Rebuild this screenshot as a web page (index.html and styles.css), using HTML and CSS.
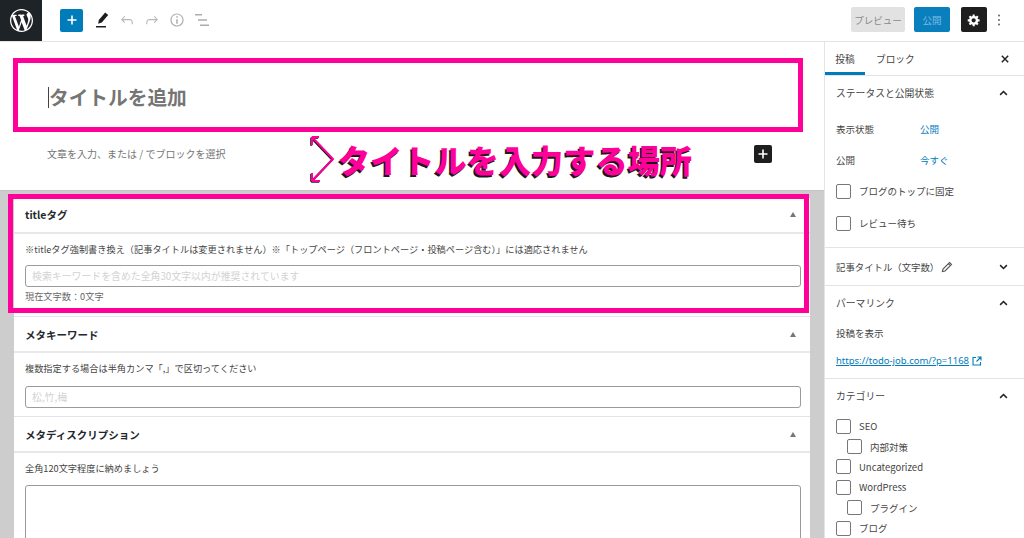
FILE: index.html
```html
<!DOCTYPE html>
<html lang="ja">
<head>
<meta charset="utf-8">
<title>投稿を編集</title>
<link rel="stylesheet" href="styles.css">
</head>
<body>
<div class="app">
  <header class="topbar">
    <div class="logo">
      <svg width="23" height="23" viewBox="0 0 20 20"><path fill="#fff" d="M20 10c0-5.51-4.49-10-10-10C4.48 0 0 4.49 0 10c0 5.52 4.48 10 10 10 5.51 0 10-4.48 10-10zM7.78 15.37L4.37 6.22c.55-.02 1.17-.08 1.17-.08.5-.06.44-1.13-.06-1.11 0 0-1.45.11-2.37.11-.18 0-.37 0-.58-.01C4.12 2.69 6.87 1.11 10 1.11c2.33 0 4.45.87 6.05 2.34-.68-.11-1.65.39-1.65 1.58 0 .74.45 1.36.9 2.1.35.61.55 1.36.55 2.46 0 1.49-1.4 5-1.4 5l-3.03-8.37c.54-.02.82-.17.82-.17.5-.05.44-1.25-.06-1.22 0 0-1.44.12-2.38.12-.87 0-2.33-.12-2.33-.12-.5-.03-.56 1.2-.06 1.22l.92.08 1.26 3.41zM17.41 10c.24-.64.74-1.87.43-4.25.7 1.29 1.05 2.71 1.05 4.25 0 3.29-1.73 6.24-4.4 7.78.97-2.59 1.94-5.2 2.92-7.78zM6.1 18.09C3.12 16.65 1.11 13.53 1.11 10c0-1.3.23-2.48.72-3.59C3.25 10.3 4.67 14.2 6.1 18.09zm4.03-6.63l2.58 6.98c-.86.29-1.76.45-2.71.45-.79 0-1.57-.11-2.29-.33.81-2.38 1.62-4.74 2.42-7.1z"/></svg>
    </div>
    <div class="tools">
      <span class="add-btn"><svg width="12" height="12" viewBox="0 0 12 12"><path fill="#fff" d="M5.2 1.500h1.600v3.700h3.700v1.600H6.800v3.700H5.200V6.800H1.500V5.200h3.700z"/></svg></span>
      <svg class="tool pen" width="18" height="18" viewBox="0 0 18 18"><path fill="#1e1e1e" d="M12.2 1.500l3 2.600-6.400 7.400-3.600 1.200.6-3.800z"/><rect x="3" y="15" width="10" height="1.500" fill="#1e1e1e"/></svg>
      <svg class="tool" width="18" height="18" viewBox="0 0 24 24"><path fill="#b5b9bd" d="M18.3 11.7c-.6-.6-1.4-.9-2.3-.9H6.7l2.9-3.3-1.1-1-4.500 5L8.500 16l1-1-2.700-2.700H16c.5 0 .9.2 1.300.5 1 1 1 3.400 1 4.500v.3h1.500v-.2c0-1.500 0-4.300-1.500-5.700z"/></svg>
      <svg class="tool" width="18" height="18" viewBox="0 0 24 24"><path fill="#b5b9bd" d="M15.6 6.500l-1.100 1 2.900 3.300H8c-.9 0-1.700.3-2.300.9-1.400 1.500-1.400 4.200-1.400 5.600v.2h1.500v-.3c0-1.100 0-3.500 1-4.500.3-.3.7-.5 1.300-.5h9.200L14.300 15l1.100 1.100 4.600-4.600-4.400-5z"/></svg>
      <svg class="tool" width="18" height="18" viewBox="0 0 24 24"><path fill="#a9adb1" d="M12 3.200c-4.800 0-8.800 3.900-8.800 8.800 0 4.800 3.900 8.800 8.800 8.800 4.800 0 8.800-3.900 8.800-8.800 0-4.800-4-8.800-8.800-8.800zm0 16c-4 0-7.200-3.300-7.200-7.200C4.800 8 8 4.800 12 4.800s7.200 3.300 7.200 7.200c0 4-3.200 7.200-7.200 7.200zM11 17h2v-6h-2v6zm0-8h2V7h-2v2z"/></svg>
      <svg class="tool" width="18" height="18" viewBox="0 0 18 18"><path fill="#a9adb1" d="M2 3h7v1.400H2zM5 8.300h9v1.400H5zM7 13.600h9V15H7z"/></svg>
    </div>
    <div class="actions">
      <span class="btn-preview">プレビュー</span>
      <span class="btn-publish">公開</span>
      <span class="btn-gear"><svg width="14" height="14" viewBox="0 0 20 20"><path fill="#fff" d="M18 12h-2.180c-.17.7-.44 1.350-.81 1.930l1.540 1.540-2.100 2.100-1.540-1.540c-.58.36-1.230.63-1.910.79V19H8v-2.180c-.68-.16-1.330-.43-1.910-.79l-1.540 1.540-2.120-2.120 1.540-1.540c-.36-.58-.63-1.230-.79-1.910H1V9.030h2.170c.16-.7.44-1.350.8-1.940L2.430 5.550l2.100-2.100 1.540 1.540c.58-.37 1.240-.64 1.930-.81V2h3v2.180c.68.16 1.330.43 1.910.79l1.540-1.540 2.120 2.120-1.540 1.540c.36.59.64 1.240.8 1.940H18V12zm-8.500 1.500c1.660 0 3-1.340 3-3s-1.340-3-3-3-3 1.340-3 3 1.340 3 3 3z"/></svg></span>
      <svg class="dots" width="4" height="12" viewBox="0 0 4 12"><circle cx="2" cy="1.500" r=".9" fill="#555"/><circle cx="2" cy="6" r=".9" fill="#555"/><circle cx="2" cy="10.500" r=".9" fill="#555"/></svg>
    </div>
  </header>

  <div class="workspace">
    <main class="main">
      <section class="editor">
        <div class="title-line"><span class="caret"></span><h1 class="post-title">タイトルを追加</h1></div>
        <div class="para-line">
          <p class="para">文章を入力、または / でブロックを選択</p>
          <span class="inline-add"><svg width="12" height="12" viewBox="0 0 12 12"><path fill="#fff" d="M5.200 1.500h1.600v3.700h3.700v1.600H6.800v3.700H5.200V6.800H1.500V5.200h3.700z"/></svg></span>
        </div>
      </section>

      <section class="metaboxes">
        <div class="panel">
          <article class="mbox">
            <div class="mbox-head head-first"><h2 class="mbox-title">titleタグ</h2><span class="tri"></span></div>
            <div class="mbox-body first-body">
              <p class="note">※titleタグ強制書き換え（記事タイトルは変更されません）※「トップページ（フロントページ・投稿ページ含む）」には適応されません</p>
              <div class="field ph">検索キーワードを含めた全角30文字以内が推奨されています</div>
              <p class="count">現在文字数：0文字</p>
            </div>
          </article>
          <article class="mbox">
            <div class="mbox-head"><h2 class="mbox-title">メタキーワード</h2><span class="tri"></span></div>
            <div class="mbox-body second-body">
              <p class="note">複数指定する場合は半角カンマ「,」で区切ってください</p>
              <div class="field field-low ph">松,竹,梅</div>
            </div>
          </article>
          <article class="mbox">
            <div class="mbox-head"><h2 class="mbox-title">メタディスクリプション</h2><span class="tri"></span></div>
            <div class="mbox-body third-body">
              <p class="note">全角120文字程度に納めましょう</p>
              <div class="area"></div>
            </div>
          </article>
        </div>
      </section>

      <div class="mark mark-title"></div>
      <div class="mark mark-meta"></div>
      <div class="callout">
        <svg class="brace" width="28" height="50" viewBox="0 0 28 50"><path d="M3 3l21 22L3 47M3 3h7M3 3v8M3 47h8M3 47v-8" fill="none" stroke="#1a1a1a" stroke-width="2" transform="translate(-.8 .8)"/><path d="M3 3l21 22L3 47M3 3h7M3 3v8M3 47h8M3 47v-8" fill="none" stroke="#ff0098" stroke-width="2"/></svg>
        <span class="callout-text">タイトルを入力する場所</span>
      </div>
    </main>

    <aside class="sidebar">
      <nav class="tabs">
        <span class="tab tab-on">投稿</span>
        <span class="tab">ブロック</span>
        <svg class="close" width="8" height="8" viewBox="0 0 10 10"><path d="M1 1l8 8M9 1l-8 8" stroke="#222" stroke-width="1.800"/></svg>
      </nav>

      <section class="sec sec-status">
        <div class="sec-head"><span>ステータスと公開状態</span><svg class="chev" width="9" height="6" viewBox="0 0 12 8"><path d="M1.500 6.500L6 2l4.500 4.500" fill="none" stroke="#222" stroke-width="2"/></svg></div>
        <div class="kv kv-a"><span class="k">表示状態</span><span class="v">公開</span></div>
        <div class="kv"><span class="k">公開</span><span class="v">今すぐ</span></div>
        <label class="chk chk-a"><span class="box"></span>ブログのトップに固定</label>
        <label class="chk chk-b"><span class="box"></span>レビュー待ち</label>
      </section>

      <section class="sec sec-seo">
        <div class="sec-head head-seo"><span class="with-icon">記事タイトル（文字数）<svg width="12" height="12" viewBox="0 0 12 12"><path d="M8.500 1.500l2 2-6.500 6.500-2.600.6.6-2.600zM7.300 2.700l2 2" fill="none" stroke="#555" stroke-width="1.100"/></svg></span><svg class="chev" width="9" height="6" viewBox="0 0 12 8"><path d="M1.500 1.500L6 6l4.500-4.500" fill="none" stroke="#222" stroke-width="2"/></svg></div>
      </section>

      <section class="sec sec-link">
        <div class="sec-head"><span>パーマリンク</span><svg class="chev" width="9" height="6" viewBox="0 0 12 8"><path d="M1.500 6.500L6 2l4.500 4.500" fill="none" stroke="#222" stroke-width="2"/></svg></div>
        <p class="view">投稿を表示</p>
        <p class="plink"><a class="url">https://todo-job.com/?p=1168</a><svg width="10" height="10" viewBox="0 0 10 10"><path d="M4 1.500H1v7.500h7.500V6M5.500 1h3.500v3.500M9 1L4.500 5.500" fill="none" stroke="#007cba" stroke-width="1.100"/></svg></p>
      </section>

      <section class="sec sec-cat">
        <div class="sec-head"><span>カテゴリー</span><svg class="chev" width="9" height="6" viewBox="0 0 12 8"><path d="M1.500 6.500L6 2l4.500 4.500" fill="none" stroke="#222" stroke-width="2"/></svg></div>
        <ul class="cats">
          <li class="cat"><span class="box"></span>SEO</li>
          <li class="cat sub"><span class="box"></span>内部対策</li>
          <li class="cat"><span class="box"></span>Uncategorized</li>
          <li class="cat"><span class="box"></span>WordPress</li>
          <li class="cat sub"><span class="box"></span>プラグイン</li>
          <li class="cat"><span class="box"></span>ブログ</li>
        </ul>
      </section>
    </aside>
  </div>
</div>
</body>
</html>
```

FILE: styles.css
```css
* { box-sizing: border-box; }
html, body { margin: 0; height: 100%; overflow: hidden; background: #fff; }
body { font-family: "Noto Sans CJK JP", "Noto Sans", sans-serif; color: #444; font-size: 10px; }
h1, h2, p, ul { margin: 0; padding: 0; }

.app { width: 1024px; height: 538px; display: flex; flex-direction: column; overflow: hidden; }

.topbar { height: 42px; flex: none; display: flex; align-items: flex-start; border-bottom: 1px solid #e4e4e4; }
.logo { width: 42px; height: 41px; background: #1e2327; display: flex; align-items: center; justify-content: center; }
.tools { display: flex; align-items: center; height: 40px; margin-left: 18px; }
.add-btn { width: 23px; height: 23px; background: #007cba; border-radius: 2px; display: flex; align-items: center; justify-content: center; margin-right: 10px; }
.tool { margin-right: 7px; }
.actions { margin-left: auto; display: flex; align-items: center; height: 39px; padding-right: 23px; }
.btn-preview { width: 54px; height: 25px; background: #e2e2e2; color: #8a8a8a; display: flex; align-items: center; justify-content: center; border-radius: 2px; font-size: 9.5px; }
.btn-publish { width: 36px; height: 25px; margin-left: 9px; background: #0a7fbe; color: #7cbde0; display: flex; align-items: center; justify-content: center; border-radius: 2px; font-size: 9.5px; }
.btn-gear { width: 26px; height: 25px; margin-left: 11px; background: #1e1e1e; display: flex; align-items: center; justify-content: center; border-radius: 2px; }
.dots { margin-left: 10px; }

.workspace { flex: 1; display: flex; min-height: 0; }

.main { width: 824px; flex: none; position: relative; display: flex; flex-direction: column; }
.editor { height: 148px; flex: none; padding: 42px 48px 0 48px; }
.title-line { display: flex; align-items: center; height: 26px; }
.caret { width: 1px; height: 21px; background: #444; }
.post-title { font-size: 19.7px; line-height: 26px; font-weight: 700; color: #757575; }
.para-line { display: flex; align-items: center; justify-content: space-between; margin-top: 34px; height: 20px; padding-right: 4px; margin-left: -1px; }
.para { font-size: 10px; color: #757575; margin-top: -2px; }
.inline-add { width: 18px; height: 18px; background: #1e1e1e; border-radius: 2px; display: flex; align-items: center; justify-content: center; }

.metaboxes { flex: 1; background: #cdcdcd; padding: 7px 14px 0; min-height: 0; overflow: hidden; border-top: 1px solid #c4c4c4; }
.panel { background: #fff; height: 100%; }
.mbox { border-bottom: 1px solid #e2e4e7; }
.mbox-head { height: 36px; display: flex; align-items: center; justify-content: space-between; padding: 0 14px 0 11px; border-bottom: 2px solid #e8e8e8; }
.head-first { padding-bottom: 2px; }
.mbox-title { font-size: 10.5px; font-weight: 700; color: #23282d; }
.tri { width: 0; height: 0; border-left: 3px solid transparent; border-right: 3px solid transparent; border-bottom: 5px solid #72777c; }
.mbox-body { padding: 0 9px 0 11px; }
.first-body { height: 82px; padding-top: 7px; }
.second-body { height: 63px; padding-top: 7px; }
.third-body { padding-top: 7px; }
.note { font-size: 9.2px; line-height: 16px; color: #444; white-space: nowrap; }
.field { height: 22px; margin-top: 8px; border: 1px solid #9b9b9b; border-radius: 3px; padding: 0 6px; font-size: 9.9px; line-height: 20px; }
.field-low { margin-top: 10px; }
.ph { color: #d2d2d2; }
.count { font-size: 9.2px; line-height: 14px; margin-top: 2px; color: #666; }
.area { height: 90px; margin-top: 9px; border: 1px solid #9b9b9b; border-radius: 3px; }

.mark { position: absolute; border: 5px solid #ff0098; }
.mark-title { left: 13px; top: 16px; width: 790px; height: 74px; }
.mark-meta { left: 8px; top: 152px; width: 801px; height: 119px; }
.callout { position: absolute; left: 309px; top: 92px; display: flex; align-items: center; }
.brace { display: block; }
.callout-text { margin-left: 1px; font-size: 32.2px; line-height: 50px; font-weight: 900; color: #ff0098; text-shadow: -1.5px 1.5px 0 #1a1a1a; white-space: nowrap; }

.sidebar { flex: 1; border-left: 1px solid #e2e4e7; min-width: 0; overflow: hidden; }
.tabs { height: 34px; display: flex; align-items: stretch; border-bottom: 1px solid #e2e4e7; padding-right: 15px; }
.tab { padding: 0 10px 0 11px; font-size: 9.7px; display: flex; align-items: center; color: #444; height: 33px; }
.tab-on { width: 40px; border-bottom: 3px solid #007cba; padding: 3px 0 0; justify-content: center; }
.close { margin: auto 0 auto auto; }

.sec { border-bottom: 1px solid #e2e4e7; padding: 0 11px; }
.sec-head { height: 34px; display: flex; align-items: center; justify-content: space-between; font-size: 9.8px; color: #444; padding-right: 5px; }
.head-seo { height: 38px; }
.with-icon { display: flex; align-items: center; gap: 2px; font-size: 9.4px; }
.chev { flex: none; }

.sec-status { height: 172px; }
.kv { height: 31px; display: flex; align-items: center; font-size: 9.5px; }
.kv-a { margin-top: 3px; }
.k { width: 84px; color: #444; }
.v { color: #007cba; }
.chk { display: flex; align-items: center; font-size: 9.5px; height: 32px; }
.box { width: 15px; height: 15px; flex: none; border: 1px solid #777; border-radius: 2px; margin-right: 8px; }

.sec-seo { height: 38px; }
.sec-link { height: 93px; }
.view { font-size: 9.5px; line-height: 14px; margin-top: 6px; }
.plink { margin-top: 14px; display: flex; align-items: center; gap: 3px; }
.url { font-size: 9.5px; line-height: 14px; color: #007cba; text-decoration: underline; font-family: "Noto Sans", sans-serif; }

.sec-cat { border-bottom: 0; }
.cats { list-style: none; margin-top: 3px; }
.cat { height: 20.4px; display: flex; align-items: center; font-size: 9.5px; }
.sub { padding-left: 11px; }
```
